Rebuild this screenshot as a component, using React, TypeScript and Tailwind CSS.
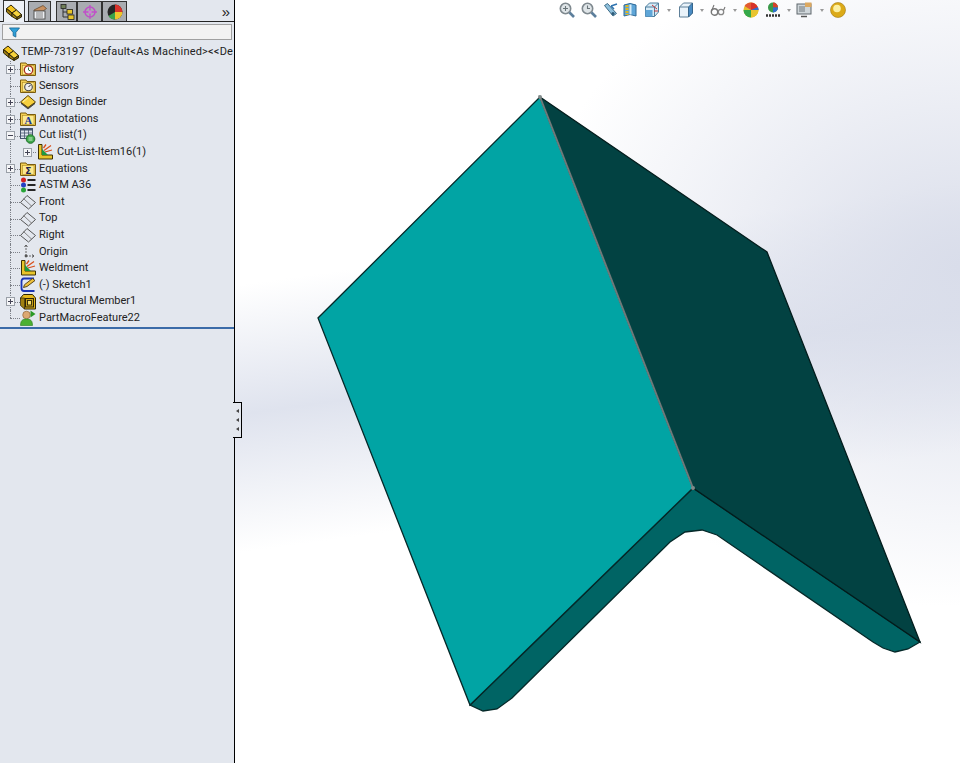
import type { ReactNode } from "react";

function Ico({ children, className = "" }: { children: ReactNode; className?: string }) {
  return (
    <svg viewBox="0 0 16 16" className={`w-4 h-4 shrink-0 ${className}`}>
      {children}
    </svg>
  );
}

function Folder({ children }: { children?: ReactNode }) {
  return (
    <Ico>
      <path d="M.5 2h5.500l1 1.500h8.500v11H.5z" fill="#f3cf55" stroke="#7a5c10" strokeWidth="1" />
      <rect x="2.500" y="4.500" width="11.500" height="9" fill="#fde98f" stroke="#b08a20" strokeWidth=".6" />
      {children}
    </Ico>
  );
}

function Blocks() {
  return (
    <Ico>
      <path d="M.5 4.500L5 1l5.500 5L6 9z" fill="#f4c41e" stroke="#2c2408" />
      <path d="M.5 4.500V8L6 12.500V9z" fill="#9a7a10" stroke="#2c2408" />
      <path d="M6 9l4.500-3 5 4.500-4.500 3z" fill="#f7d33c" stroke="#2c2408" />
      <path d="M6 9v3.500l5 3v-2z" fill="#a8860f" stroke="#2c2408" />
      <path d="M15.500 10.500v2.500L11 15.500v-2z" fill="#7a600c" stroke="#2c2408" />
    </Ico>
  );
}

const History = () => (
  <Folder>
    <circle cx="8.500" cy="9" r="4.200" fill="#fff" stroke="#a83020" strokeWidth="1.300" />
    <path d="M8.500 6.500V9l2 1" fill="none" stroke="#2f6b2f" strokeWidth="1" />
  </Folder>
);

const Sensors = () => (
  <Folder>
    <circle cx="8.500" cy="9" r="3.800" fill="#eee" stroke="#444" strokeWidth="1.100" />
    <path d="M8.500 9l2-2" stroke="#222" strokeWidth="1" />
  </Folder>
);

const Binder = () => (
  <Ico>
    <path d="M1 9.500l7 5.500 7-5.500-7-1z" fill="#4c4c4c" stroke="#2c2c2c" strokeWidth=".7" />
    <path d="M.5 8L8 1.500 15.500 8 8 13.500z" fill="#f6cf3e" stroke="#5b460c" strokeWidth="1" />
    <path d="M3 8l5-4.200" stroke="#fdf0a8" strokeWidth="1" />
  </Ico>
);

const Annot = () => (
  <Folder>
    <text x="8.300" y="12.700" textAnchor="middle" fontSize="10.500" fontWeight="700" fontFamily="'Liberation Serif', serif" fill="#16379a">
      A
    </text>
  </Folder>
);

const Sigma = () => (
  <Folder>
    <text x="8.300" y="12.500" textAnchor="middle" fontSize="9" fontWeight="700" fontFamily="'DejaVu Sans', sans-serif" fill="#1c2350">
      Σ
    </text>
  </Folder>
);

const CutTable = () => (
  <Ico>
    <rect x=".5" y=".5" width="12" height="10" fill="#dfe6ef" stroke="#44546f" />
    <path d="M.5 1.500h12" stroke="#44546f" strokeWidth="2" />
    <path d="M1 5h11M1 8h11M4.500 1v9M8.500 1v9" stroke="#44546f" strokeWidth=".8" />
    <circle cx="10.500" cy="11" r="4.300" fill="#3ea84a" stroke="#1f6e2a" />
    <path d="M8.500 10h4M8.500 12h4" stroke="#dff5df" strokeWidth=".9" />
  </Ico>
);

const WeldIcon = () => (
  <Ico>
    <path d="M1.500 .5h3.500v10.500h10.500v4H1.500z" fill="#e8c52a" stroke="#3e3206" />
    <path d="M5 11V5l6 6z" fill="#1f9a40" />
    <path d="M7 6.500l7-5M8 8l7-2M6.500 4l2.500-3.500" stroke="#d8501c" strokeWidth="1.300" />
  </Ico>
);

const Material = () => (
  <Ico>
    <circle cx="3.500" cy="3" r="2.500" fill="#d42020" />
    <circle cx="3.500" cy="8" r="2.500" fill="#2440c4" />
    <circle cx="3.500" cy="13" r="2.500" fill="#28a438" />
    <path d="M7.500 3h8M7.500 8h8M7.500 13h8" stroke="#262626" strokeWidth="1.800" />
  </Ico>
);

const PlaneIcon = () => (
  <Ico>
    <path d="M.5 8.500L7 1.500l8.500 7L8.500 15z" fill="none" stroke="#555" strokeWidth="1" />
    <path d="M3.500 4.500l8.500 8" stroke="#777" strokeWidth=".9" />
  </Ico>
);

const OriginIcon = () => (
  <Ico>
    <path d="M6 1v11M6 12h8" stroke="#666" strokeWidth="1" fill="none" strokeDasharray="2 1" />
    <path d="M4.500 3L6 1l1.500 2M12 10.500l2 1.500-2 1.500" stroke="#555" strokeWidth=".9" fill="none" />
    <circle cx="6" cy="12" r="1.400" fill="#555" />
  </Ico>
);

const SketchIcon = () => (
  <Ico>
    <path d="M14 1.500H4Q1.500 1.500 1.500 4.500v6.500q0 3 2.500 3h10.500" fill="none" stroke="#1a34b4" strokeWidth="1.800" />
    <path d="M3.500 10.500l1-2.800L12.500 1.500l2.500 2-8 6z" fill="#efc13a" stroke="#4a380c" strokeWidth=".9" />
  </Ico>
);

const Member = () => (
  <Ico>
    <path d="M.5 4l3-3.500h9l3 3.500v11h-11z" fill="#e4b81e" stroke="#2c2406" />
    <path d="M.5 4v7.500l4 3.500V4z" fill="#a08010" stroke="#2c2406" strokeWidth=".7" />
    <rect x="5.500" y="4.500" width="8" height="8.500" fill="#c8a018" stroke="#2c2406" />
    <rect x="7.500" y="6.500" width="4" height="4.500" fill="#f6de68" stroke="#2c2406" strokeWidth=".9" />
  </Ico>
);

const Macro = () => (
  <Ico>
    <circle cx="6.500" cy="5" r="3.800" fill="#dca872" stroke="#85592c" strokeWidth=".6" />
    <path d="M.5 15.500c0-5 2-6.500 6-6.500s6 1.500 6 6.500z" fill="#4cb032" stroke="#2a7a1c" strokeWidth=".6" />
    <path d="M10.500 .5l5 3.500-5 3.500z" fill="#2a9a26" />
  </Ico>
);

function Expander({ minus = false }: { minus?: boolean }) {
  return (
    <span className="flex justify-center items-center bg-[#f4f5f7] border border-[#9aa0a8] w-[9px] h-[9px] shrink-0">
      <span className="relative bg-[#445] w-[5px] h-px">
        {!minus && <span className="top-[-2px] left-[2px] absolute bg-[#445] w-px h-[5px]" />}
      </span>
    </span>
  );
}

type Row = { label: string; icon: ReactNode; expand?: "plus" | "minus"; child?: boolean; last?: boolean };

const rows: Row[] = [
  { label: "History", icon: <History />, expand: "plus" },
  { label: "Sensors", icon: <Sensors /> },
  { label: "Design Binder", icon: <Binder />, expand: "plus" },
  { label: "Annotations", icon: <Annot />, expand: "plus" },
  { label: "Cut list(1)", icon: <CutTable />, expand: "minus" },
  { label: "Cut-List-Item16(1)", icon: <WeldIcon />, expand: "plus", child: true },
  { label: "Equations", icon: <Sigma />, expand: "plus" },
  { label: "ASTM A36", icon: <Material /> },
  { label: "Front", icon: <PlaneIcon /> },
  { label: "Top", icon: <PlaneIcon /> },
  { label: "Right", icon: <PlaneIcon /> },
  { label: "Origin", icon: <OriginIcon /> },
  { label: "Weldment", icon: <WeldIcon /> },
  { label: "(-) Sketch1", icon: <SketchIcon /> },
  { label: "Structural Member1", icon: <Member />, expand: "plus" },
  { label: "PartMacroFeature22", icon: <Macro />, last: true },
];

function TreeRow({ row }: { row: Row }) {
  return (
    <div className="relative flex items-center h-[16.6px] whitespace-nowrap">
      {/* dotted tree lines */}
      <span className={`absolute left-[10px] top-0 border-l border-dotted border-[#7c8088] ${row.last ? "h-1/2" : "h-full"}`} />
      <span className={`absolute top-1/2 border-t border-dotted border-[#7c8088] ${row.child ? "left-[28px] w-[8px]" : "left-[10px] w-[10px]"}`} />
      {row.child ? (
        <div className="z-10 flex justify-end pr-[5px] w-[37px] shrink-0">
          <Expander />
        </div>
      ) : (
        <div className="z-10 flex pl-[6px] w-[20px] shrink-0">
          {row.expand && <Expander minus={row.expand === "minus"} />}
        </div>
      )}
      <div className="z-10">{row.icon}</div>
      <span className={row.child ? "ml-[4px]" : "ml-[3px]"}>{row.label}</span>
    </div>
  );
}

function Tab({ active, children, className }: { active?: boolean; children: ReactNode; className: string }) {
  return (
    <div
      className={`flex justify-center items-center border-t border-x border-[#333] ${
        active ? "bg-[#eef1f6] h-[22px] mb-[-1px] z-10" : "bg-[#a9acb1] h-[20px]"
      } ${className}`}
    >
      {children}
    </div>
  );
}

function Tool({ className, children }: { className: string; children: ReactNode }) {
  return <div className={`shrink-0 ${className}`}>{children}</div>;
}

const Arrow = ({ className }: { className: string }) => (
  <span className={`shrink-0 border-x-[2.5px] border-x-transparent border-t-[3px] border-t-[#999] w-0 h-0 ${className}`} />
);

function Lens({ clock }: { clock?: boolean }) {
  return (
    <Ico>
      <circle cx="6.500" cy="6.500" r="5.200" fill="#dfe5e8" stroke="#7f898f" strokeWidth="1.600" />
      <path d="M10.500 10.500l4.500 4.500" stroke="#5d7f9c" strokeWidth="2.600" />
      {clock ? (
        <path d="M6.500 3.500v3h2.500" stroke="#6a757a" strokeWidth="1.100" fill="none" />
      ) : (
        <path d="M4 6.500h5M6.500 4v5" stroke="#6a757a" strokeWidth="1.100" />
      )}
    </Ico>
  );
}

export default function App() {
  return (
    <div className="flex w-[960px] h-[763px] overflow-hidden font-['Roboto',sans-serif] text-[#222] text-[11px]">
      {/* feature manager */}
      <aside className="relative z-10 bg-[#e3e7ee] border-black border-r w-[235px] shrink-0">
        <div className="relative flex items-end border-[#222] border-b h-[22px]">
          <Tab active className="ml-[3px] w-[22px]">
            <Blocks />
          </Tab>
          <Tab className="ml-[3px] w-[23px]">
            <Ico>
              <path d="M2 6l9-4.500 3.500 3L11 7H2z" fill="#c89060" stroke="#5f4224" strokeWidth=".7" />
              <rect x="2" y="7" width="11" height="8" fill="#eceef2" stroke="#555" />
              <path d="M4 9h7M4 11h7M4 13h7" stroke="#808080" />
            </Ico>
          </Tab>
          <Tab className="ml-[5px] w-[21px]">
            <Ico>
              <path d="M4 4v9h5M4 8h4" stroke="#333" fill="none" />
              <rect x="2" y=".5" width="5" height="4" fill="#707f58" stroke="#222" strokeWidth=".8" />
              <rect x="8" y="5.500" width="5.500" height="4.500" fill="#e8c52a" stroke="#222" strokeWidth=".8" />
              <rect x="9" y="11" width="6" height="4.500" fill="#e8c52a" stroke="#222" strokeWidth=".8" />
            </Ico>
          </Tab>
          <Tab className="w-[25px]">
            <Ico>
              <circle cx="8" cy="8" r="5" fill="none" stroke="#c050c8" strokeWidth="1.500" />
              <path d="M8 1v14M1 8h14" stroke="#c050c8" strokeWidth="1.300" />
              <circle cx="8" cy="8" r="1.800" fill="#d080d8" />
            </Ico>
          </Tab>
          <Tab className="w-[25px]">
            <Ico>
              <circle cx="8" cy="8" r="7.500" fill="#262626" />
              <path d="M8 8V.5A7.500 7.500 0 0 1 15.500 8z" fill="#d8322a" />
              <path d="M8 8h7.500A7.500 7.500 0 0 1 8 15.500z" fill="#efc52c" />
              <path d="M8 8v7.500A7.500 7.500 0 0 1 1.500 12z" fill="#3aa24a" />
            </Ico>
          </Tab>
          <span className="top-[2px] right-[4px] absolute font-['Liberation_Sans',sans-serif] text-[15px] leading-[20px]">»</span>
        </div>
        <div className="flex items-center bg-[#f2f2f2] mx-[2px] mt-[2px] px-[6px] border border-[#a0a0a0] h-[16px]">
          <svg viewBox="0 0 12 12" className="w-[11px] h-[11px]">
            <path d="M.5 1h11L7.500 6v5l-3-1.500V6z" fill="#2f9fd8" stroke="#14608c" strokeWidth=".8" />
          </svg>
        </div>
        <div className="flex items-center mt-[4px] pl-[3px] h-[17px] whitespace-nowrap">
          <Blocks />
          <span className="ml-[2px]">TEMP-73197&nbsp;&nbsp;</span>
          <span className="tracking-[0.2px]">(Default&lt;As Machined&gt;&lt;&lt;De</span>
        </div>
        <div className="border-[#3b6ba8] border-b-2">
          {rows.map((r) => (
            <TreeRow key={r.label} row={r} />
          ))}
        </div>
        {/* collapse handle */}
        <div className="top-[402px] left-[233px] absolute flex flex-col justify-center items-center gap-[5px] bg-[#e3e7ee] border-black border-y border-r w-[9px] h-[36px]">
          <span className="border-y-[2.5px] border-y-transparent border-r-[3px] border-r-[#444] w-0 h-0" />
          <span className="border-y-[2.5px] border-y-transparent border-r-[3px] border-r-[#444] w-0 h-0" />
          <span className="border-y-[2.5px] border-y-transparent border-r-[3px] border-r-[#444] w-0 h-0" />
        </div>
      </aside>

      {/* graphics area */}
      <main className="relative flex-1 bg-[radial-gradient(ellipse_430px_340px_at_100%_35%,#d9ddea_0%,#d9ddea00_100%),linear-gradient(172deg,#ffffff_33%,#dfe3ee_48%,#ffffff_64%)]">
        <div className="top-[2px] left-[324px] absolute flex items-center h-4">
          <Tool className="ml-0"><Lens /></Tool>
          <Tool className="ml-[6px]"><Lens clock /></Tool>
          <Tool className="ml-[6px]">
            <Ico>
              <path d="M1.500 3.500l8.500 10.500 3.500-2.500L4.500 1.500z" fill="#8fc0dc" stroke="#3e6c88" />
              <path d="M8 4l6-2M8 4l3 3" stroke="#2f74b0" strokeWidth="1.500" fill="none" />
              <circle cx="10" cy="11.500" r="1.600" fill="#2e5a78" />
            </Ico>
          </Tool>
          <Tool className="ml-[3px]">
            <Ico>
              <path d="M2 3q6-3 12 0v11q-6-3-12 0z" fill="#5fa6d8" stroke="#2e6a98" />
              <path d="M5 3v10" stroke="#e2b820" strokeWidth="3" strokeDasharray="2 1" />
              <path d="M8.500 2.500v10" stroke="#d6ecf8" strokeWidth="2" />
            </Ico>
          </Tool>
          <Tool className="ml-[6px]">
            <Ico>
              <path d="M1.500 5l4-4h9v9l-4 4.500h-9z" fill="#d6eaf6" stroke="#4f7f9e" />
              <path d="M1.500 8h7v6.500h-7z" fill="#5fa6d8" />
              <path d="M1.500 5h9v9.500M10.500 5l4-4" fill="none" stroke="#4f7f9e" />
              <path d="M8 3l5 4M10 9h4" stroke="#c83838" strokeWidth="1" />
            </Ico>
          </Tool>
          <Arrow className="ml-[6.5px]" />
          <Tool className="ml-[7.5px]">
            <Ico>
              <path d="M1.500 5l4-4h9v10l-4 4h-9z" fill="#eaf3fa" stroke="#5f8099" />
              <path d="M10.500 5l4-4v10l-4 4z" fill="#4a8cc4" stroke="#36668c" />
              <path d="M1.500 5h9" stroke="#5f8099" />
            </Ico>
          </Tool>
          <Arrow className="ml-[5.5px]" />
          <Tool className="ml-[6.5px]">
            <Ico>
              <circle cx="4.500" cy="10" r="3.200" fill="none" stroke="#777" strokeWidth="1.400" />
              <circle cx="11" cy="10" r="2.700" fill="none" stroke="#888" strokeWidth="1.300" />
              <path d="M1.500 9l2.500-6M7.500 9h1M13.500 8.500L15 5" stroke="#777" strokeWidth="1.100" fill="none" />
            </Ico>
          </Tool>
          <Arrow className="ml-[6.5px]" />
          <Tool className="ml-[6.5px]">
            <Ico>
              <circle cx="8" cy="8" r="7.500" fill="#e6bd2c" />
              <path d="M8 8V.5A7.500 7.500 0 0 1 15.500 8z" fill="#d8322a" />
              <path d="M8 8V.5A7.500 7.500 0 0 0 1.500 4z" fill="#e25a34" />
              <path d="M8 8h7.500A7.500 7.500 0 0 1 8 15.500z" fill="#e8c42e" />
              <path d="M8 8H.5A7.500 7.500 0 0 0 8 15.500z" fill="#35a84a" />
              <path d="M8 8L15 5A7.500 7.500 0 0 1 15.500 8z" fill="#2f6fd0" />
            </Ico>
          </Tool>
          <Tool className="ml-[6px]">
            <Ico>
              <circle cx="8" cy="5.500" r="5" fill="#3a9a4a" />
              <path d="M8 5.500V.5a5 5 0 0 1 5 5z" fill="#d8402a" />
              <path d="M8 5.500h5a5 5 0 0 1-5 5z" fill="#2f6fd0" />
              <path d="M1 13.500h14" stroke="#333" strokeWidth="2.600" strokeDasharray="2 1" />
            </Ico>
          </Tool>
          <Arrow className="ml-[5.5px]" />
          <Tool className="ml-[5.5px]">
            <Ico>
              <rect x="1" y="2" width="14" height="10" fill="#cfd6da" stroke="#5f676d" />
              <path d="M3 5h6M3 7h6M3 9h6" stroke="#6f777d" />
              <rect x="9" y=".5" width="6.500" height="4.500" fill="#dca860" />
              <path d="M5 14.500h6" stroke="#555" strokeWidth="1.500" />
            </Ico>
          </Tool>
          <Arrow className="ml-[7.5px]" />
          <Tool className="ml-[6.5px]">
            <Ico>
              <circle cx="8" cy="8" r="7.500" fill="#dcaa18" stroke="#a07812" strokeWidth=".6" />
              <circle cx="7" cy="6.500" r="3.800" fill="#fcf0a0" />
            </Ico>
          </Tool>
        </div>

        {/* the part */}
        <svg viewBox="235 0 725 763" className="block w-full h-full">
          <polygon
            points="693,488 920,642 908,649 895,652 883,648 873,642 717,535 702,530 685,532 670,542 512,698 497,709 483,711 470,705"
            fill="#006464"
            stroke="#052828"
            strokeWidth="1.300"
          />
          <polygon points="540,97 767,252 920,642 693,488" fill="#024242" stroke="#031c1c" strokeWidth="1.300" />
          <polygon points="540,97 318,318 470,705 693,488" fill="#01a4a4" stroke="#052828" strokeWidth="1.300" />
          <line x1="540" y1="97" x2="693" y2="488" stroke="#6e7a7a" strokeWidth="2" />
          <circle cx="540" cy="97" r="2" fill="#808a8a" />
          <circle cx="693" cy="488" r="2" fill="#808a8a" />
        </svg>
      </main>
    </div>
  );
}
